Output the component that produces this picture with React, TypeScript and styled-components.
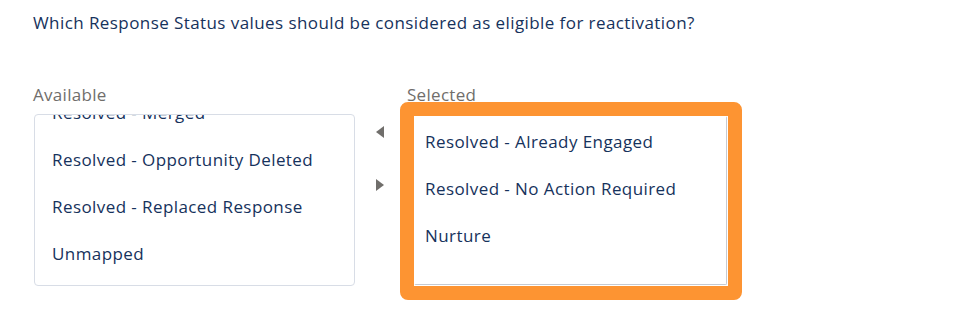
import React from "react";
import styled, { createGlobalStyle } from "styled-components";

const available = [
  "Resolved - Merged",
  "Resolved - Opportunity Deleted",
  "Resolved - Replaced Response",
  "Unmapped",
];

const selected = [
  "Resolved - Already Engaged",
  "Resolved - No Action Required",
  "Nurture",
];

export default function App() {
  return (
    <Page>
      <GlobalStyle />
      <Question>Which Response Status values should be considered as eligible for reactivation?</Question>
      <DualList>
        <Column>
          <Label>Available</Label>
          <ListBox>
            <Options offset={28}>
              {available.map((item) => (
                <Option key={item}>{item}</Option>
              ))}
            </Options>
          </ListBox>
        </Column>
        <Arrows>
          <Arrow dir="left" />
          <Arrow dir="right" />
        </Arrows>
        <Column>
          <Label indent={7}>Selected</Label>
          <Highlight>
            <ListBox inner>
              <Options offset={1}>
                {selected.map((item) => (
                  <Option key={item} inner>
                    {item}
                  </Option>
                ))}
              </Options>
            </ListBox>
          </Highlight>
        </Column>
      </DualList>
    </Page>
  );
}

const GlobalStyle = createGlobalStyle`
  body {
    margin: 0;
    background: #ffffff;
    font-family: "Open Sans", "Liberation Sans", sans-serif;
  }
`;

const Page = styled.div`
  width: 972px;
  height: 316px;
  padding: 11px 0 0 33px;
  box-sizing: border-box;
  overflow: hidden;
`;

const Question = styled.div`
  font-size: 17px;
  letter-spacing: 0.42px;
  line-height: 24px;
  color: #16325c;
  white-space: nowrap;
`;

const DualList = styled.div`
  display: flex;
  align-items: flex-start;
  margin-top: 50px;
`;

const Column = styled.div`
  display: flex;
  flex-direction: column;
`;

const Label = styled.div<{ indent?: number }>`
  font-size: 17px;
  letter-spacing: 0.3px;
  line-height: 20px;
  height: 20px;
  color: #706e6b;
  padding-left: ${(p) => p.indent ?? 0}px;
  margin-bottom: 9px;
  white-space: nowrap;
`;

const ListBox = styled.div<{ inner?: boolean }>`
  box-sizing: border-box;
  width: ${(p) => (p.inner ? 313 : 321)}px;
  height: ${(p) => (p.inner ? 169 : 172)}px;
  border: 1px solid ${(p) => (p.inner ? "#c6cad1" : "#d8dde6")};
  border-radius: ${(p) => (p.inner ? 2 : 4)}px;
  ${(p) => p.inner && "border-top-color: #ffffff; border-left-color: #ffffff;"}
  margin-left: ${(p) => (p.inner ? 0 : 1)}px;
  background: #ffffff;
  overflow: hidden;
`;

const Options = styled.ul<{ offset: number }>`
  list-style: none;
  margin: ${(p) => -p.offset}px 0 0;
  padding: 2px 0 0;
`;

const Option = styled.li<{ inner?: boolean }>`
  height: 47px;
  line-height: 47px;
  padding-left: ${(p) => (p.inner ? 10 : 17)}px;
  font-size: 17px;
  letter-spacing: 0.42px;
  color: #16325c;
  white-space: nowrap;
`;

const Arrows = styled.div`
  width: 45px;
  box-sizing: border-box;
  display: flex;
  flex-direction: column;
  align-items: flex-start;
  gap: 41px;
  padding: 41px 0 0 21px;
`;

const Arrow = styled.span<{ dir: "left" | "right" }>`
  width: 0;
  height: 0;
  border-top: 6px solid transparent;
  border-bottom: 6px solid transparent;
  ${(p) =>
    p.dir === "left"
      ? "border-right: 8px solid #706e6b;"
      : "border-left: 8px solid #706e6b;"}
`;

const Highlight = styled.div`
  margin-top: -12px;
  border: 14px solid #fd9432;
  border-radius: 8px;
  width: 314px;
  height: 170px;
  background: #ffffff;
`;
